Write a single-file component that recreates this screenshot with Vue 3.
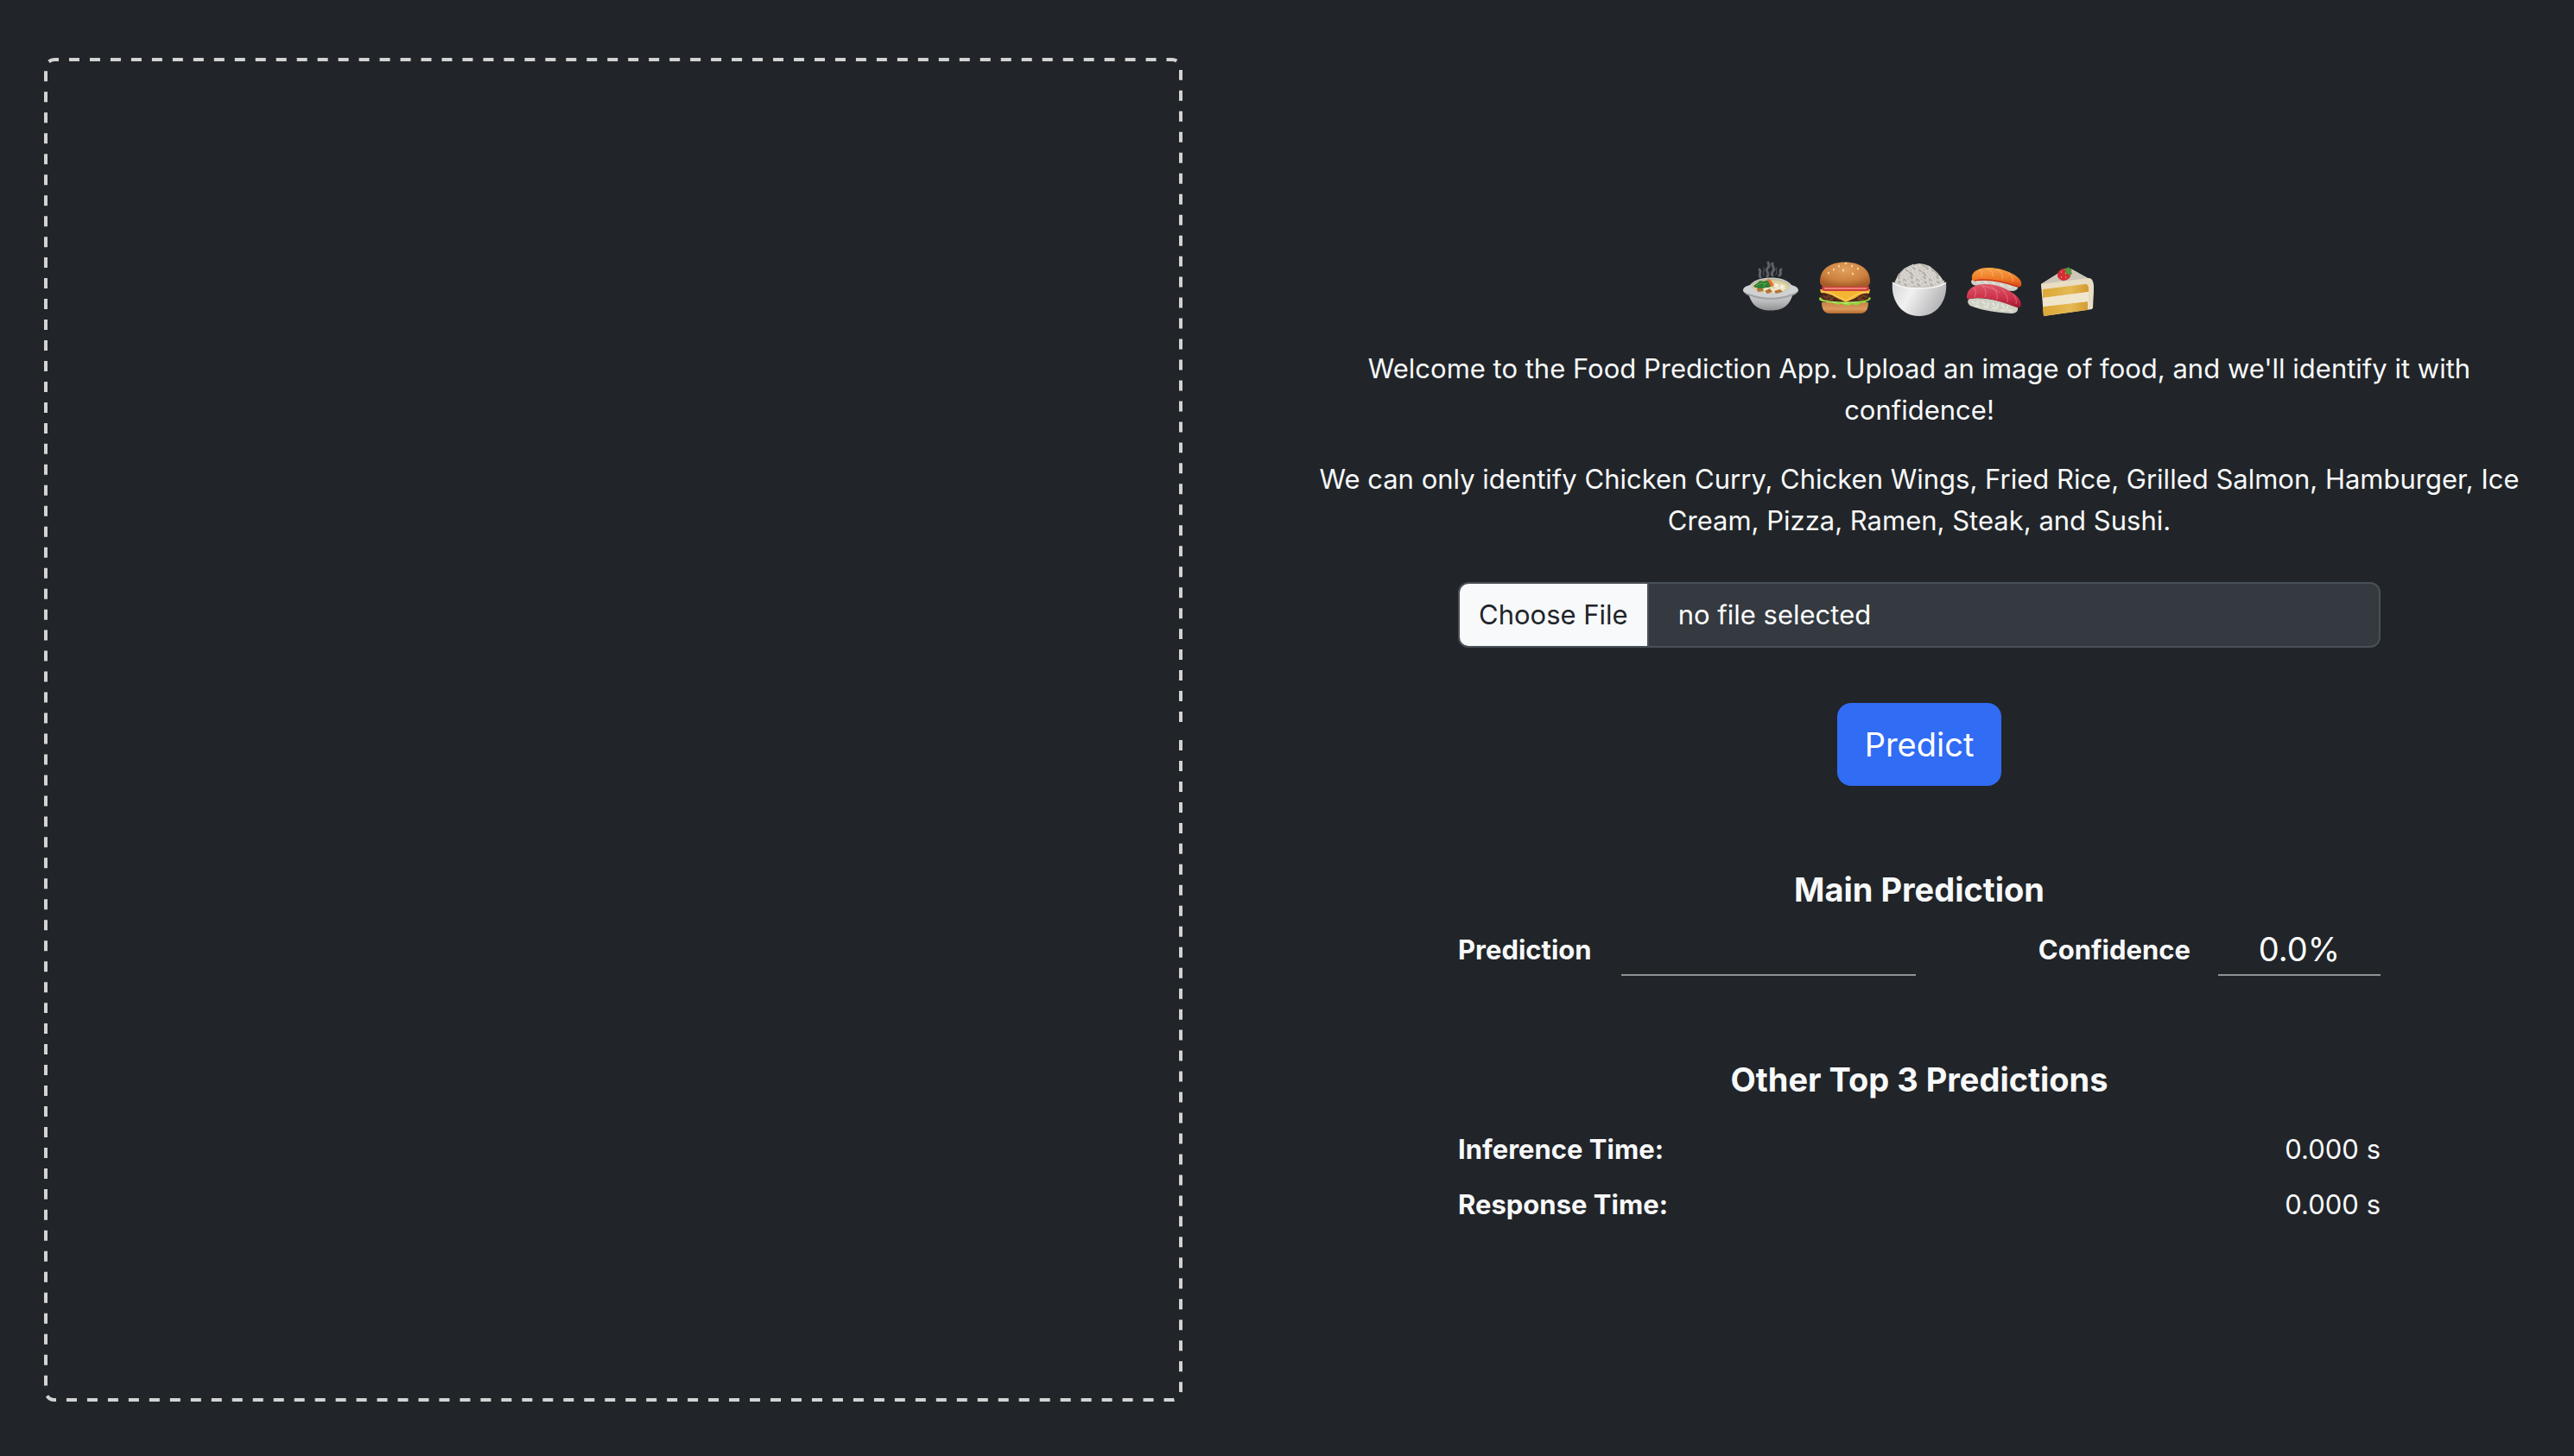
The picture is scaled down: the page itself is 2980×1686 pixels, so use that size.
<script setup>
import { ref, onMounted, onBeforeUnmount } from 'vue'

const fileName = ref('no file selected')
const prediction = ref('')
const confidence = ref('0.0%')
const times = [
  { label: 'Inference Time:', value: '0.000 s' },
  { label: 'Response Time:', value: '0.000 s' },
]

function onFile(event) {
  const file = event.target.files[0]
  fileName.value = file ? file.name : 'no file selected'
}

// Dashed outline of the preview area, redrawn whenever the area changes size.
const preview = ref(null)
const outline = ref('')
const outlineLength = ref(1)
const DASH = 12
const RADIUS = 10

function drawOutline() {
  const w = preview.value.clientWidth
  const h = preview.value.clientHeight
  const l = 2
  const t = 2
  const r = w - 2
  const b = h - 2
  const mid = Math.round(h / 2)
  const arc = (x, y) => `A${RADIUS} ${RADIUS} 0 0 1 ${x} ${y}`
  outline.value = [
    `M${r} ${mid + 12}`, `V${b - RADIUS}`, arc(r - RADIUS, b),
    `H${l + RADIUS}`, arc(l, b - RADIUS),
    `V${t + RADIUS}`, arc(l + RADIUS, t),
    `H${r - RADIUS}`, arc(r, t + RADIUS),
    `V${mid + 3}`,
  ].join('')
  const length = 2 * (r - l + b - t) - 8 * RADIUS + 2 * Math.PI * RADIUS - 9
  outlineLength.value = Math.round(length / (2 * DASH)) * 2 * DASH
}

let observer
onMounted(() => {
  drawOutline()
  observer = new ResizeObserver(drawOutline)
  observer.observe(preview.value)
})
onBeforeUnmount(() => observer.disconnect())

// Grains of the rice bowl: rows of short strokes inside the mound.
const grains = []
for (let row = 0; row < 9; row++) {
  const half = [7, 13, 17, 20, 23, 25, 26, 27, 28][row]
  for (let x = -half; x <= half; x += 3) {
    const k = (row * 7 + x + 60) % 5
    grains.push({ x: 34 + x + (row % 2), y: 7 + row * 2.7, dx: (k - 2) * 0.7, dy: k % 2 ? 1.6 : -1, dark: k === 0 })
  }
}
</script>

<template>
  <main class="page">
    <section ref="preview" class="preview" aria-label="Image preview">
      <svg class="outline" aria-hidden="true">
        <path :d="outline" :pathLength="outlineLength" />
      </svg>
    </section>

    <section class="panel">
      <h1 class="foods" aria-label="Food Prediction App">
        <svg viewBox="0 0 68 68" aria-hidden="true">
          <defs>
            <linearGradient id="pot" x1="0" y1="0" x2="0" y2="1">
              <stop offset="0" stop-color="#d2d3d3" /><stop offset=".5" stop-color="#b9bbbc" /><stop offset="1" stop-color="#8f9192" />
            </linearGradient>
          </defs>
          <g fill="none" stroke="#b9bcc0" stroke-linecap="round" opacity=".4">
            <path d="M22 20c-3-4 2-5-1-9M30 19c4-4-4-6 1-10 2-2 1-4 0-6M36 18c-3-5 4-5 1-9 0-2-2-3-1-5M44 18c4-3-1-5 2-7" stroke-width="3" />
            <path d="M26 18c-2-4 2-6 0-9M40 17c3-4-2-5 1-8" stroke-width="1" />
          </g>
          <path d="M8 38C11 50 17 58.500 34 58.500S57 50 60 38Z" fill="url(#pot)" />
          <path d="M10 29c5-6 14-8.500 24-8.500S54 23 58 29c4 1 8 3 8 6s-4 4-8 5c-6 3-14 4-24 4s-18-1-24-4c-4-1-8-2-8-5s4-5 8-6Z" fill="#d0d1d2" />
          <path d="M3 36c2 3 6 3 9 4 13 5 31 5 44 0 3-1 7-1 9-4-1 4-5 5-8 6-12 5-34 5-46 0-3-1-7-2-8-6Z" fill="#a2a4a5" />
          <ellipse cx="34" cy="30" rx="22" ry="8.500" fill="#c0bda5" />
          <ellipse cx="34" cy="31" rx="21" ry="7.500" fill="#ddd0a0" />
          <path d="M26 33l7-3 4 3 6-2 9 1-4 4-10 2H26Z" fill="#efe5c7" />
          <path d="M18 33l6-1 2 4-7 1ZM27 36l6-3 3 4-6 2ZM38 36l7-2 3 3-8 2Z" fill="#b3743a" />
          <path d="M14 31c2-4 5-3 6-6 4-2 5 1 8-1 5-1 5 2 8 3 0 5-5 5-8 5-4 2-9 1-14-1Z" fill="#2f7d34" />
          <path d="M17 30l6-3 6 1M25 31l5-5" stroke="#57a84b" fill="none" />
          <path d="M30 22l4 1 4 7-4 1Z" fill="#ec6f2d" />
          <path d="M39 27l5 1-2 4-5-1ZM46 28l5 2-3 3-4-1Z" fill="#f4eedb" />
        </svg>

        <svg viewBox="0 0 68 68" aria-hidden="true">
          <defs>
            <radialGradient id="bun" cx=".5" cy=".3" r=".7">
              <stop offset="0" stop-color="#e2a05c" /><stop offset=".65" stop-color="#cd8140" /><stop offset="1" stop-color="#a85d29" />
            </radialGradient>
            <linearGradient id="heel" x1="0" y1="0" x2="0" y2="1">
              <stop offset="0" stop-color="#c98147" /><stop offset=".6" stop-color="#dc9a5c" /><stop offset="1" stop-color="#b4692f" />
            </linearGradient>
          </defs>
          <path d="M7 49h54c0 8-3 13-9 13H16c-6 0-9-5-9-13Z" fill="url(#heel)" />
          <path d="M4 44c6-4 54-4 60 0-2 5-4 2-6 5-2 2-4 0-6 1-2 2-5 3-7 2-3-2-5 1-8 1-4 0-5-3-8-2-4 1-5 1-8-1-3-1-5 1-8-1-3-1-3 0-5-1-3-1-4-1-4-4Z" fill="#8fd640" />
          <path d="M7 46c3-1 4 2 7 1s5 2 8 2 5-2 8 0 6 1 9 0 6 1 9-1 5 0 7-2 4-1 6-2" stroke="#c4ee72" fill="none" stroke-width="1.500" />
          <path d="M7 37h54c2 7 1 9-5 10-13 2-31 2-43 0-7-1-8-3-6-10Z" fill="#4b2819" />
          <path d="M9 42l4 2 2-3 4 4 3-3 6 4M43 45l5-4 3 4 4-4 4 2M12 46h8m28 0h8" stroke="#784325" fill="none" stroke-width="1.500" />
          <path d="M5 34h58l-1 5c-7-1-11 1-16 5L35 49 23 43c-5-3-11-5-17-5Z" fill="#f4b533" />
          <path d="M7 37c7-1 13 2 17 5l11 5 11-6c5-3 9-4 15-4" stroke="#ffd66d" fill="none" />
          <path d="M8 30h53c2 3 1 6-3 6H11c-4 0-5-3-3-6Z" fill="#cc3c3c" />
          <path d="M10 33h49" stroke="#ee8177" stroke-width="2" />
          <path d="M5 25C5 11 16 2.500 34 2.500S63 11 63 25c0 4-3 6-9 6H14c-6 0-9-2-9-6Z" fill="url(#bun)" />
          <g fill="#f3d9a3">
            <ellipse cx="27" cy="7" rx="1" ry="1.500" /><ellipse cx="35" cy="4" rx="1.500" ry="1" /><ellipse cx="42" cy="7" rx="1" ry="1.500" /><ellipse cx="21" cy="11" rx="1" ry="1.500" /><ellipse cx="32" cy="12" rx="1" ry="1.700" /><ellipse cx="43" cy="16" rx="1" ry="1.500" /><ellipse cx="49" cy="10" rx="1" ry="1.500" /><ellipse cx="15" cy="15" rx="1" ry="1.500" />
          </g>
        </svg>

        <svg viewBox="0 0 68 68" aria-hidden="true">
          <defs>
            <linearGradient id="bowl" x1="0" y1="0" x2="1" y2=".35">
              <stop offset="0" stop-color="#d6d6d7" /><stop offset=".4" stop-color="#f1f1f2" /><stop offset="1" stop-color="#b5b5b7" />
            </linearGradient>
          </defs>
          <path d="M5 27C8 19 12 13 18 9l6-3 5-1 5-1 6 1 6 2 6 5c5 5 9 9 11 15v7H5Z" fill="#c6c2bc" />
          <g stroke-width="1.200" stroke-linecap="round">
            <line v-for="(g, i) in grains" :key="i" :x1="g.x - g.dx" :y1="g.y - g.dy" :x2="g.x + g.dx" :y2="g.y + g.dy" :stroke="g.dark ? '#aca7a1' : '#dfdbd6'" />
          </g>
          <path d="M3 26c10 9 52 9 62 0 2 18-8 39-31 39S1 44 3 26Z" fill="url(#bowl)" />
          <path d="M3 26c10 9 52 9 62 0" fill="none" stroke="#f7f7f7" stroke-width="1.500" />
        </svg>

        <svg viewBox="0 0 68 68" aria-hidden="true">
          <defs>
            <linearGradient id="salmon" x1="0" y1="0" x2="0" y2="1">
              <stop offset="0" stop-color="#f7a548" /><stop offset=".6" stop-color="#ee7926" /><stop offset="1" stop-color="#d84616" />
            </linearGradient>
            <linearGradient id="tuna" x1="0" y1="0" x2="0" y2="1">
              <stop offset="0" stop-color="#dd5868" /><stop offset=".6" stop-color="#cc3149" /><stop offset="1" stop-color="#9f1930" />
            </linearGradient>
          </defs>
          <path d="M10 22c10-2 38 2 52 8 1 3-1 5-5 6-16 0-32-3-46-7-3-1-4-5-1-7Z" fill="#d2d1c7" />
          <path d="M9 21c-1-6 5-11 17-12 18-1 39 9 40 17 1 4-1 6-4 5-14-5-34-10-50-7-2 1-3-1-3-3Z" fill="url(#salmon)" />
          <path d="M18 12c3 1 3 4 2 7m7-9c6 2 6 6 6 9m5-8c6 3 7 7 6 11m7-7c5 4 6 7 5 10" stroke="#fac082" fill="none" opacity=".7" />
          <path d="M12 24c15-3 36 2 50 7" stroke="#cb3612" stroke-width="1.500" fill="none" />
          <path d="M6 45c18-3 40 3 56 10 1 5-3 7-8 7-18-1-35-4-47-9-3-2-4-6-1-8Z" fill="#d0d1c5" />
          <g stroke="#e8e8e1" stroke-width="1.500" stroke-linecap="round">
            <path d="M9 48l3 2m4-3l-1 4m6-3l3 3m4-2l-1 4m6-3l2 3m4-2l-1 4m6-3l2 3m4-1l-1 3M13 53l4 1m6 0l4 1m6 1l4 0m6 2l4 0m4 0l4 1M15 25l3 2m6-2l3 3m6-2l3 3m6-1l3 2m6 0l3 2" />
          </g>
          <path d="M3 43C3 34 11 28 25 28c17 0 37 11 40 20 2 5 0 8-4 7-16-6-37-14-54-10-3 1-4 0-4-2Z" fill="url(#tuna)" />
          <path d="M11 32c3 3 3 7 1 11m8-14c5 4 6 9 4 14m7-13c6 4 8 10 7 16m6-12c5 5 7 10 6 15m7-9c3 4 4 7 3 11M20 30c8 1 16 4 21 8" stroke="#ee929b" fill="none" opacity=".6" />
        </svg>

        <svg viewBox="0 0 68 68" aria-hidden="true">
          <defs>
            <linearGradient id="sponge" x1="0" y1="0" x2="1" y2="0">
              <stop offset="0" stop-color="#dca837" /><stop offset=".6" stop-color="#e5b953" /><stop offset="1" stop-color="#d49b32" />
            </linearGradient>
          </defs>
          <path d="M3 28L30 11c3-2 6-1 9 0l18 10c6 3 7 7 7 12l-2 24L6 65Z" fill="#eee4cc" />
          <path d="M3 28L30 11c3-2 6-1 9 0l18 10c2 1 3 2 4 3Z" fill="#cbc6b7" />
          <path d="M3 28l55-7c5 0 6 5 6 12l-1 23-5 1V33c0-4-2-5-5-4L4 34Z" fill="#e9ddc4" />
          <path d="M5 34l49-6c3 0 4 2 4 5v4L5 44ZM5 54l52-6v10L6 65Z" fill="url(#sponge)" />
          <path d="M5 44l53-7v11L5 54Z" fill="#f0e6cc" />
          <path d="M22 18c0-5 5-9 10-8 4 1 6 5 5 9-2 4-6 5-9 5-3-1-6-3-6-6Z" fill="#d42d35" />
          <path d="M26 14h1m4 2h1m-6 4h1m4 0h1" stroke="#f6a184" stroke-width="1.500" />
          <path d="M29 11l5-2 1-1 1 2 3 0-1 3 1 4-3-1 1 5-3-5-4-1 2-2Z" fill="#5b9440" />
        </svg>
      </h1>

      <p class="intro">Welcome to the Food Prediction App. Upload an image of food, and we'll identify it with confidence!</p>
      <p class="intro">We can only identify Chicken Curry, Chicken Wings, Fried Rice, Grilled Salmon, Hamburger, Ice Cream, Pizza, Ramen, Steak, and Sushi.</p>

      <form class="form" @submit.prevent>
        <label class="file" for="food-image">
          <span class="file-button">Choose File</span>
          <span class="file-name">{{ fileName }}</span>
          <input id="food-image" class="file-input" type="file" accept="image/*" @change="onFile">
        </label>
        <button class="predict" type="submit">Predict</button>
      </form>

      <h2 class="heading">Main Prediction</h2>
      <div class="result">
        <label for="prediction">Prediction</label>
        <input id="prediction" v-model="prediction" class="value name" type="text" readonly>
        <label class="second" for="confidence">Confidence</label>
        <input id="confidence" v-model="confidence" class="value rate" type="text" readonly>
      </div>

      <h2 class="heading">Other Top 3 Predictions</h2>
      <dl class="times">
        <div v-for="time in times" :key="time.label" class="time">
          <dt>{{ time.label }}</dt>
          <dd>{{ time.value }}</dd>
        </div>
      </dl>
    </section>
  </main>
</template>

<style>
body {
  margin: 0;
  background: #212529;
}
</style>

<style scoped>
.page {
  box-sizing: border-box;
  display: grid;
  grid-template-columns: 1318fr 1424fr;
  gap: 141px;
  min-height: 100vh;
  padding: 67px 46px 63px 51px;
  background: #212529;
  color: #f8f9fa;
  font-family: Inter, "Liberation Sans", sans-serif;
  font-size: 31px;
  line-height: 48px;
}

.preview {
  position: relative;
}

.outline {
  position: absolute;
  inset: 0;
  width: 100%;
  height: 100%;
}

.outline path {
  fill: none;
  stroke: #d3d3d3;
  stroke-width: 4;
  stroke-dasharray: 12 12;
}

.panel {
  display: flex;
  flex-direction: column;
  align-items: center;
  justify-content: center;
  padding-top: 30px;
}

.foods {
  display: flex;
  gap: 18px;
  margin: 0 0 34px;
}

.foods svg {
  width: 68px;
  height: 68px;
}

.intro {
  margin: 0 12px 32px;
  text-align: center;
}

.form {
  display: flex;
  flex-direction: column;
  align-items: center;
  gap: 64px;
  width: 75%;
  margin: 15px 0 96px;
}

.file {
  position: relative;
  box-sizing: border-box;
  display: flex;
  width: 100%;
  border: 2px solid #495057;
  border-radius: 12px;
  background: #343a40;
  color: #fff;
  overflow: hidden;
}

.file-button {
  padding: 12px 22px;
  border-right: 2px solid #495057;
  background: #f8f9fa;
  color: #212529;
}

.file-name {
  padding: 12px 34px;
}

.file-input {
  position: absolute;
  inset: 0;
  opacity: 0;
}

.predict {
  padding: 18px 32px;
  border: 0;
  border-radius: 16px;
  background: #316cf4;
  color: #fff;
  font-family: inherit;
  font-size: 38px;
  line-height: 60px;
}

.heading {
  margin: 0;
  font-size: 38px;
  font-weight: 700;
  line-height: 48px;
}

.result {
  display: flex;
  align-items: center;
  width: 75%;
  margin: 8px 0 96px;
  font-weight: 700;
}

.result label {
  padding-top: 8px;
}

.value {
  box-sizing: border-box;
  height: 68px;
  padding: 8px 0 0;
  border: 0;
  border-bottom: 2px solid #909294;
  outline: 0;
  background: transparent;
  color: #fff;
  font-family: inherit;
  font-size: 38px;
  text-align: center;
}

.name {
  width: 32%;
  margin-left: 34px;
}

.second {
  margin-left: auto;
}

.rate {
  width: 188px;
  margin-left: 32px;
}

.times {
  display: flex;
  flex-direction: column;
  gap: 16px;
  width: 75%;
  margin: 33px 0 0;
}

.time {
  display: flex;
  justify-content: space-between;
}

.time dt {
  font-weight: 700;
}

.time dd {
  margin: 0;
}
</style>
